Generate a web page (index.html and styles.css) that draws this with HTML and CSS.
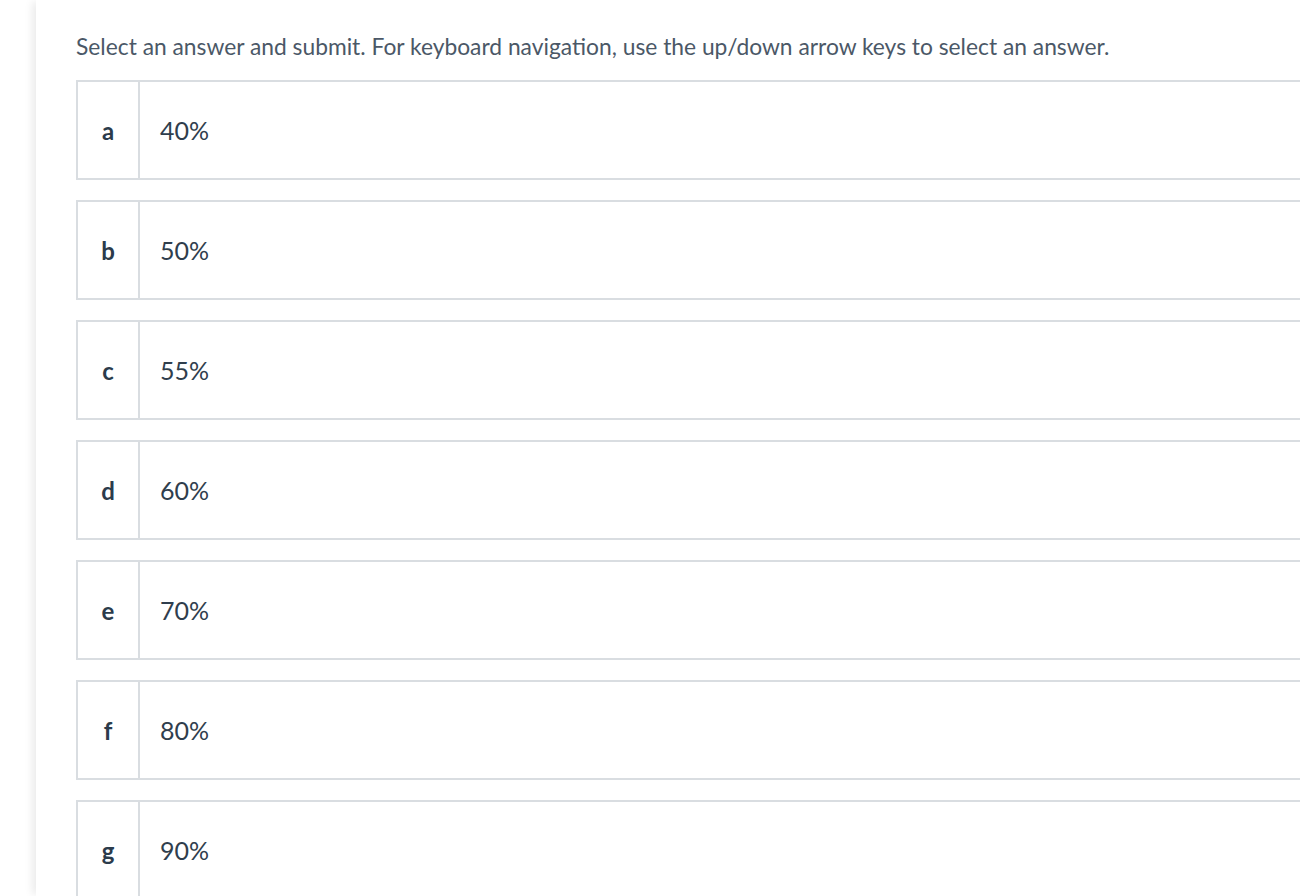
FILE: index.html
```html
<!DOCTYPE html>
<html>
<head>
<meta charset="utf-8">
<link rel="stylesheet" href="styles.css">
</head>
<body>
<div class="page">
  <div class="panel">
    <p class="prompt">Select an answer and submit. For keyboard navigation, use the up/down arrow keys to select an answer.</p>
    <div class="options">
      <div class="option"><div class="key">a</div><div class="val">40%</div></div>
      <div class="option"><div class="key">b</div><div class="val">50%</div></div>
      <div class="option"><div class="key">c</div><div class="val">55%</div></div>
      <div class="option"><div class="key">d</div><div class="val">60%</div></div>
      <div class="option"><div class="key">e</div><div class="val">70%</div></div>
      <div class="option"><div class="key">f</div><div class="val">80%</div></div>
      <div class="option"><div class="key">g</div><div class="val">90%</div></div>
    </div>
  </div>
</div>
</body>
</html>
```
FILE: styles.css
```css
html, body {
  margin: 0;
  padding: 0;
  background: #ffffff;
  overflow: hidden;
}
.page {
  width: 1300px;
  height: 896px;
  padding-left: 36px;
  box-sizing: border-box;
  overflow: hidden;
}
.panel {
  height: 896px;
  background: #ffffff;
  box-shadow: -6px 0 8px -2px rgba(0,0,0,0.08);
  padding: 0 0 0 40px;
  overflow: hidden;
  font-family: "Lato", "Liberation Sans", sans-serif;
}
.prompt {
  margin: 0;
  padding-top: 32px;
  height: 48px;
  font-size: 22.8px;
  line-height: 28px;
  color: #4b5867;
  white-space: nowrap;
}
.options {
  display: flex;
  flex-direction: column;
  gap: 20px;
  width: 1300px;
}
.option {
  display: flex;
  height: 100px;
  box-sizing: border-box;
  border: 2px solid #d9dde1;
}
.key {
  width: 60px;
  border-right: 2px solid #d9dde1;
  display: flex;
  align-items: center;
  justify-content: center;
  font-weight: 700;
  font-size: 24px;
  color: #2b3b4b;
}
.val {
  display: flex;
  align-items: center;
  padding-left: 20px;
  font-size: 25px;
  color: #2f3e4d;
}
```
